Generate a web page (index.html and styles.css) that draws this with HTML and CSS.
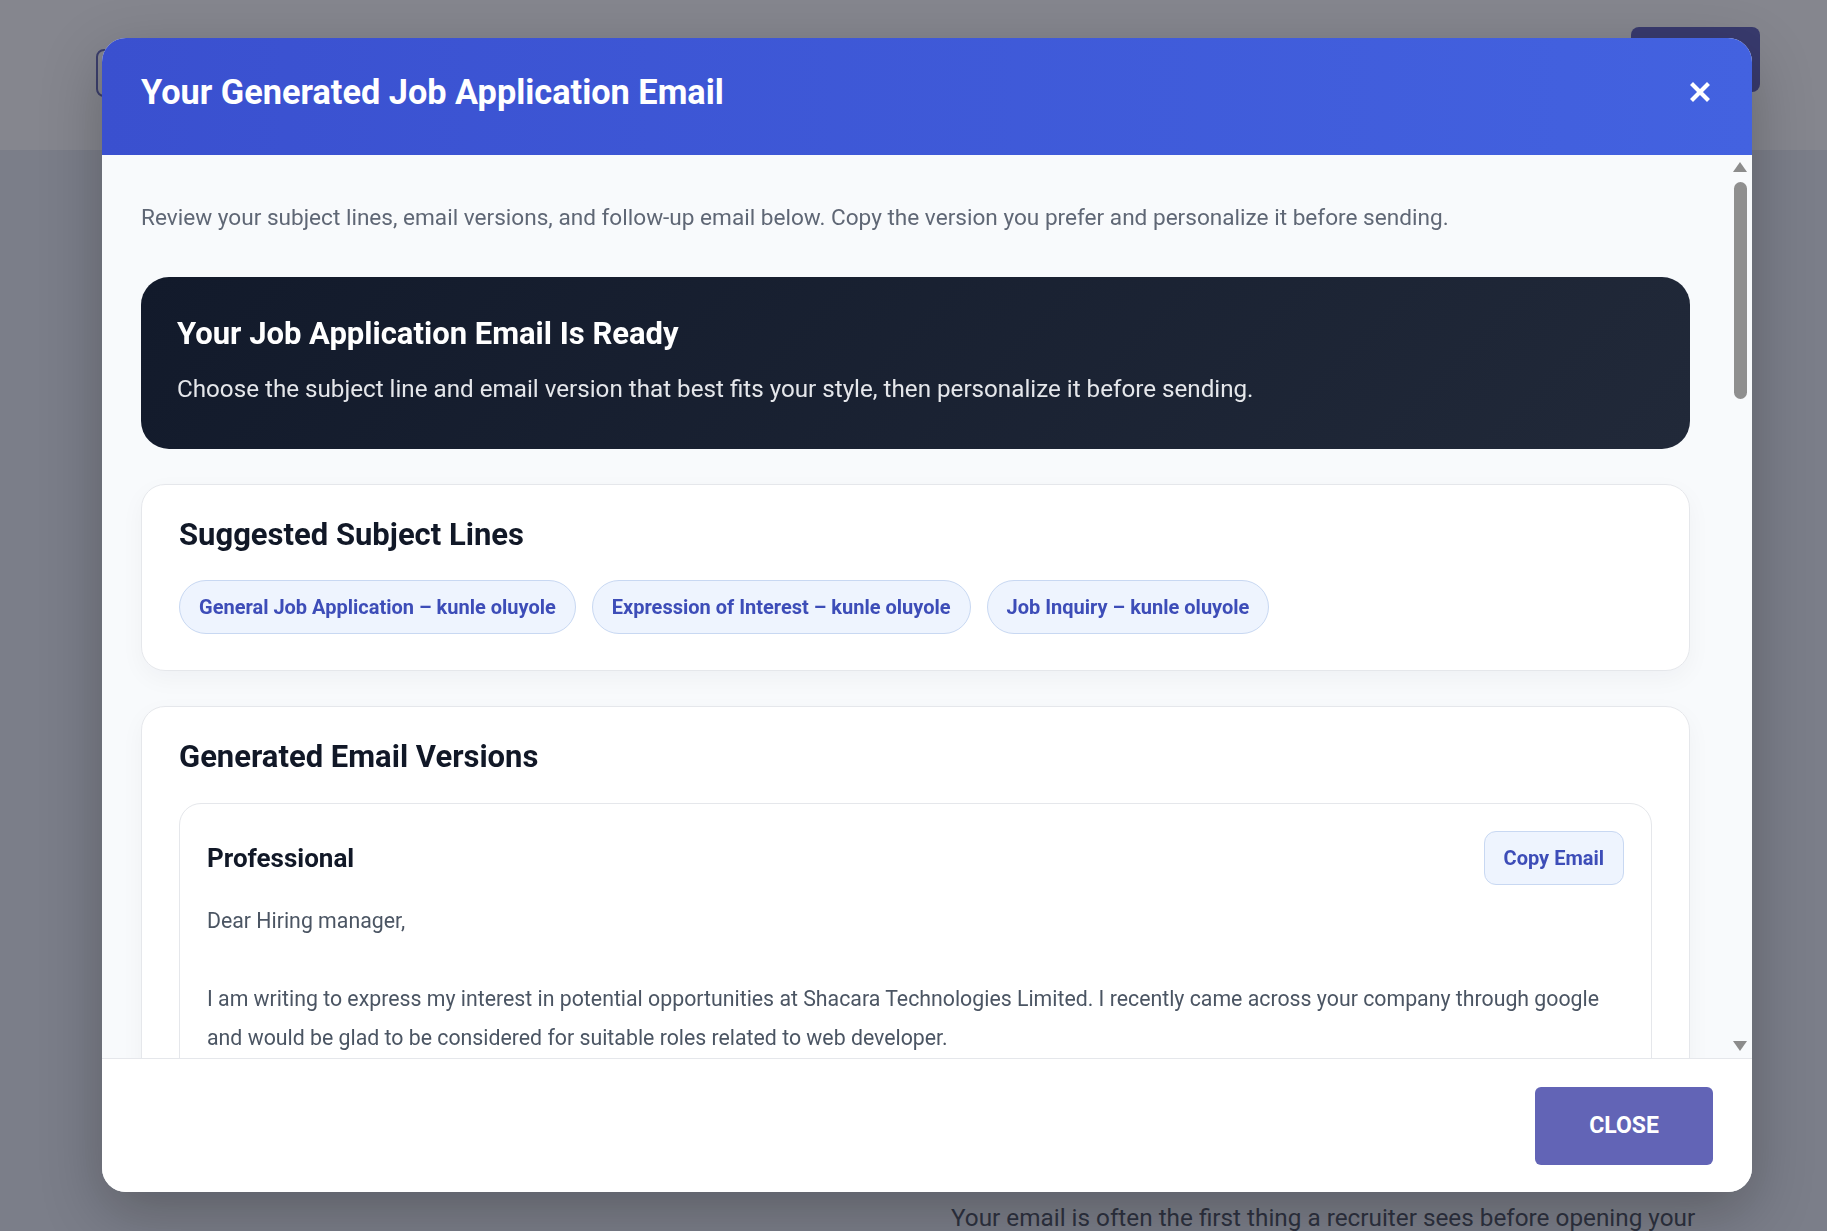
FILE: index.html
```html
<!DOCTYPE html>
<html lang="en">
<head>
    <meta charset="UTF-8">
    <meta name="viewport" content="width=device-width, initial-scale=1.0">
    <title>Job Application Email</title>
    <link rel="stylesheet" href="styles.css">
</head>
<body>

    <!-- page behind the dialog -->
    <header class="page-header">
        <button class="outline-btn" aria-label="Back"></button>
        <button class="solid-btn" aria-label="Generate"></button>
    </header>

    <main class="page-main">
        <p class="page-note">Your email is often the first thing a recruiter sees before opening your CV, so make every line count.</p>
    </main>

    <!-- result dialog -->
    <div class="overlay">
        <div class="modal">
            <div class="modal-header">
                <h1>Your Generated Job Application Email</h1>
                <button class="icon-close" aria-label="Close">
                    <svg width="22" height="22" viewBox="0 0 22 22">
                        <path d="M4 4 L18 18 M18 4 L4 18" stroke="#ffffff" stroke-width="4.2" stroke-linecap="square" fill="none"/>
                    </svg>
                </button>
            </div>

            <div class="modal-main">
                <div class="modal-body">
                    <p class="intro">Review your subject lines, email versions, and follow-up email below. Copy the version you prefer and personalize it before sending.</p>

                    <div class="hero">
                        <h2>Your Job Application Email Is Ready</h2>
                        <p>Choose the subject line and email version that best fits your style, then personalize it before sending.</p>
                    </div>

                    <section class="card">
                        <h3>Suggested Subject Lines</h3>
                        <div class="chips">
                            <span class="chip">General Job Application – kunle oluyole</span>
                            <span class="chip">Expression of Interest – kunle oluyole</span>
                            <span class="chip">Job Inquiry – kunle oluyole</span>
                        </div>
                    </section>

                    <section class="card">
                        <h3>Generated Email Versions</h3>

                        <div class="version">
                            <div class="version-top">
                                <h4>Professional</h4>
                                <button class="copy-btn">Copy Email</button>
                            </div>
                            <p class="email-text">Dear Hiring manager,

I am writing to express my interest in potential opportunities at Shacara Technologies Limited. I recently came across your company through google and would be glad to be considered for suitable roles related to web developer.

I have hands-on experience building responsive websites and web applications with HTML, CSS, JavaScript and React. I enjoy turning ideas into clean, user-friendly interfaces and working closely with designers and back-end developers to deliver reliable products.

I have attached my CV for your review and would welcome the opportunity to discuss how my skills could support your team. Thank you for your time and consideration.

Best regards,
kunle oluyole</p>
                        </div>

                        <div class="version">
                            <div class="version-top">
                                <h4>Friendly</h4>
                                <button class="copy-btn">Copy Email</button>
                            </div>
                            <p class="email-text">Hi Hiring manager,

I hope you are doing well. I came across Shacara Technologies Limited through google and I really like the work your team is doing, so I wanted to reach out about any web developer openings you may have.

I build responsive, easy-to-use websites and web apps, and I love working with a team to bring good ideas to life. I would be happy to share more about my projects and how I could help.

My CV is attached. Thanks so much for reading, and I hope to hear from you soon.

Warm regards,
kunle oluyole</p>
                        </div>

                        <div class="version">
                            <div class="version-top">
                                <h4>Short &amp; Direct</h4>
                                <button class="copy-btn">Copy Email</button>
                            </div>
                            <p class="email-text">Dear Hiring manager,

I am interested in web developer opportunities at Shacara Technologies Limited. I have experience building responsive websites and web applications and would love to contribute to your team.

Please find my CV attached. I would appreciate the chance to discuss any suitable openings.

Kind regards,
kunle oluyole</p>
                        </div>
                    </section>

                    <section class="card">
                        <h3>Follow-Up Email</h3>
                        <div class="version">
                            <div class="version-top">
                                <h4>Following Up – kunle oluyole</h4>
                                <button class="copy-btn">Copy Email</button>
                            </div>
                            <p class="email-text">Dear Hiring manager,

I hope you are well. I am following up on the email I sent last week about web developer opportunities at Shacara Technologies Limited. I remain very interested in joining your team and would be glad to provide any further information you may need.

Thank you again for your time, and I look forward to hearing from you.

Best regards,
kunle oluyole</p>
                        </div>
                    </section>
                </div>

                <!-- scroll track drawn beside the body -->
                <div class="scroll-rail">
                    <span class="rail-up"></span>
                    <span class="rail-thumb"></span>
                    <span class="rail-down"></span>
                </div>
            </div>

            <div class="modal-footer">
                <button class="close-btn">Close</button>
            </div>
        </div>
    </div>

</body>
</html>
```

FILE: styles.css
```css
* {
    box-sizing: border-box;
}

body {
    margin: 0;
    font-family: Roboto, 'Noto Sans', sans-serif;
    background-color: #eaeef4;
    height: 1231px;
    overflow: hidden;
}

button {
    font-family: inherit;
    cursor: pointer;
}

/* page underneath */

.page-header {
    height: 150px;
    background-color: #ffffff;
    display: flex;
    justify-content: space-between;
    align-items: flex-start;
    padding: 0 67px 0 96px;
}

.outline-btn {
    margin-top: 49px;
    width: 120px;
    height: 48px;
    border: 2px solid #6c70ba;
    border-radius: 8px;
    background: #ffffff;
}

.solid-btn {
    margin-top: 27px;
    width: 129px;
    height: 65px;
    border: none;
    border-radius: 8px;
    background-color: #6668be;
}

.page-main {
    padding: 1051px 0 0 951px;
}

.page-note {
    margin: 0;
    width: 760px;
    font-size: 24.3px;
    line-height: 34px;
    color: #505662;
}

/* dialog */

.overlay {
    position: fixed;
    inset: 0;
    background-color: rgba(12, 14, 30, 0.5);
    padding: 38px 75px 39px 102px;
    display: flex;
}

.modal {
    flex: 1;
    display: flex;
    flex-direction: column;
    background-color: #f8fafc;
    border-radius: 24px;
    overflow: hidden;
    box-shadow: 0 20px 60px rgba(0, 0, 0, 0.25);
}

.modal-header {
    height: 117px;
    flex-shrink: 0;
    display: flex;
    align-items: center;
    justify-content: space-between;
    padding: 0 41px 10px 39px;
    background: linear-gradient(90deg, #3a50cf, #4362e0);
}

.modal-header h1 {
    margin: 0;
    color: #ffffff;
    font-size: 34.3px;
    font-weight: 700;
}

.icon-close {
    background: none;
    border: none;
    padding: 0;
    width: 22px;
    height: 22px;
    display: flex;
}

.modal-main {
    flex: 1;
    min-height: 0;
    display: flex;
}

.modal-body {
    flex: 1;
    overflow-y: auto;
    scrollbar-width: none;
    padding: 47px 44px 40px 39px;
}

.scroll-rail {
    width: 18px;
    flex-shrink: 0;
    display: flex;
    flex-direction: column;
    padding: 7px 0;
}

.rail-up,
.rail-down {
    width: 0;
    height: 0;
    margin-left: -1px;
    border-left: 7.5px solid transparent;
    border-right: 7.5px solid transparent;
}

.rail-up {
    border-bottom: 10px solid #8c8c8c;
}

.rail-down {
    margin-top: auto;
    border-top: 10px solid #8c8c8c;
}

.rail-thumb {
    margin-top: 10px;
    width: 13px;
    height: 217px;
    border-radius: 7px;
    background-color: #8f8f8f;
}

.intro {
    margin: 0 0 43px;
    font-size: 22.6px;
    line-height: 32px;
    color: #5f6775;
}

.hero {
    background: linear-gradient(135deg, #121a2b, #212939);
    border-radius: 28px;
    padding: 37px 36px 44px;
    color: #ffffff;
}

.hero h2 {
    margin: 0;
    font-size: 31px;
    line-height: 40px;
    font-weight: 700;
}

.hero p {
    margin: 19px 0 0;
    font-size: 24.2px;
    line-height: 32px;
    color: #e5e7eb;
}

.card {
    margin-top: 35px;
    background-color: #ffffff;
    border: 1px solid #e5e7eb;
    border-radius: 24px;
    padding: 32px 37px 36px;
    box-shadow: 0 8px 24px rgba(15, 23, 42, 0.04);
}

.card h3 {
    margin: 0;
    font-size: 31px;
    line-height: 36px;
    font-weight: 700;
    color: #111827;
}

.chips {
    display: flex;
    flex-wrap: wrap;
    gap: 16px;
    margin-top: 27px;
}

.chip {
    display: inline-block;
    padding: 13px 19px;
    border-radius: 999px;
    border: 1px solid #c8d8f2;
    background-color: #eef4fe;
    color: #3d4db8;
    font-size: 20px;
    line-height: 26px;
    font-weight: 700;
}

.version {
    margin-top: 28px;
    border: 1px solid #e5e7eb;
    border-radius: 22px;
    padding: 27px 27px 30px;
}

.version-top {
    display: flex;
    justify-content: space-between;
    align-items: center;
}

.version-top h4 {
    margin: 0;
    font-size: 26px;
    font-weight: 700;
    color: #111827;
}

.copy-btn {
    height: 54px;
    padding: 0 19px;
    border: 1px solid #c8d8f2;
    border-radius: 12px;
    background-color: #eef4fe;
    color: #3d4db8;
    font-size: 20px;
    font-weight: 700;
}

.email-text {
    margin: 16px 0 0;
    white-space: pre-line;
    font-size: 21.3px;
    line-height: 39px;
    color: #4b5563;
}

.modal-footer {
    height: 134px;
    flex-shrink: 0;
    background-color: #ffffff;
    border-top: 1px solid #e5e7eb;
    display: flex;
    justify-content: flex-end;
    align-items: center;
    padding: 0 39px;
}

.close-btn {
    width: 178px;
    height: 78px;
    border: none;
    border-radius: 6px;
    background-color: #6264b6;
    color: #ffffff;
    font-size: 23px;
    font-weight: 700;
    text-transform: uppercase;
}
```
